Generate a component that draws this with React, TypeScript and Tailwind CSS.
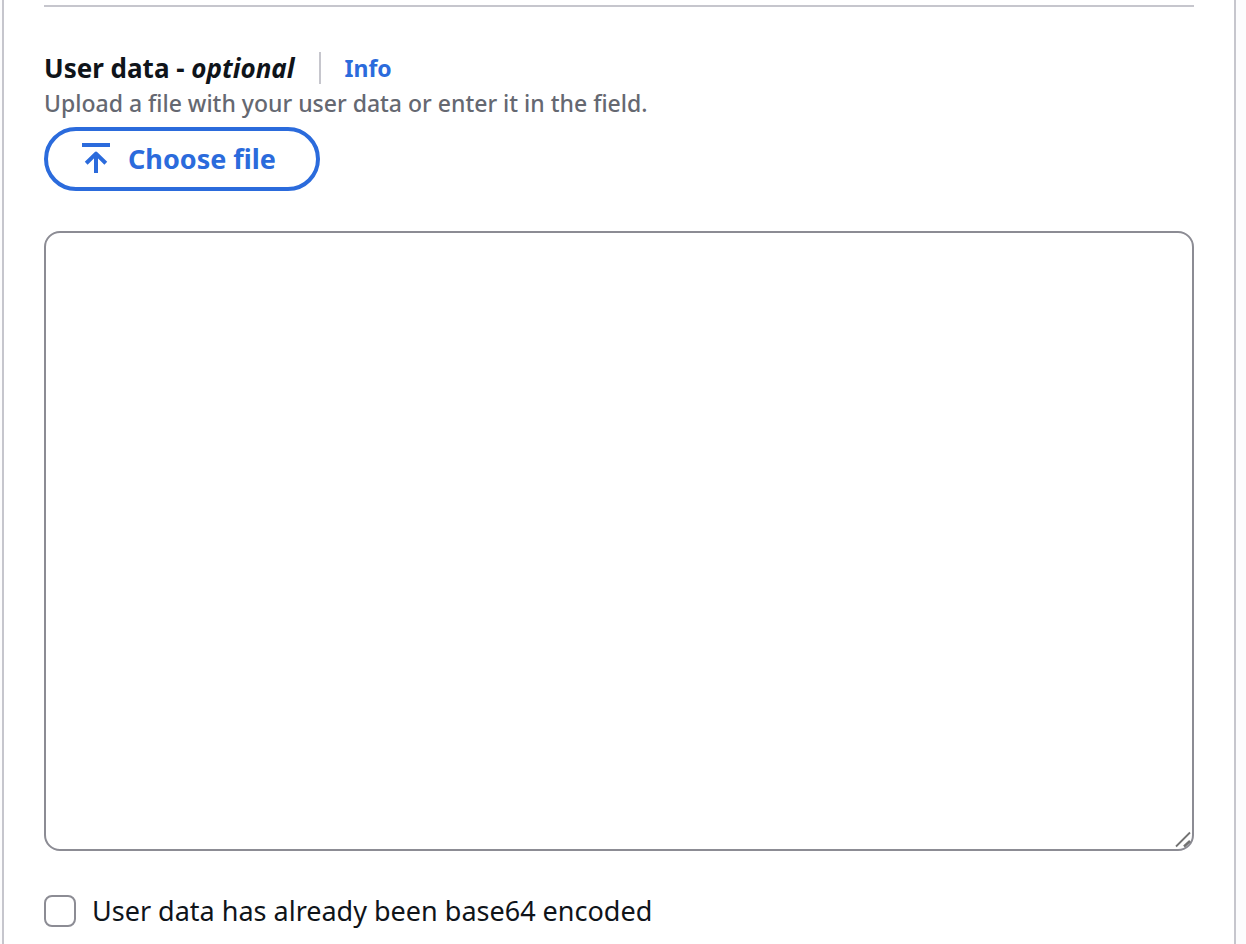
import { useId } from "react";

function UploadIcon() {
  return (
    <svg
      aria-hidden="true"
      viewBox="0 0 32 32"
      className="size-8 shrink-0"
      fill="none"
      stroke="currentColor"
      strokeWidth="4"
    >
      <path d="M2 2h28" />
      <path d="M16 30V11" />
      <path d="M6.200 20.200 16 10.600l9.800 9.600" strokeLinejoin="round" />
    </svg>
  );
}

function ResizeGrip() {
  return (
    <svg
      aria-hidden="true"
      viewBox="0 0 18 18"
      className="pointer-events-none absolute right-0.5 bottom-0.5 size-[18px]"
      fill="none"
      stroke="#737373"
      strokeWidth="1.800"
    >
      <path d="M2 15.500 16 1.500" />
      <path d="M10 15.500 16 10" strokeWidth="2.400" />
    </svg>
  );
}

export default function App() {
  const id = useId();
  const fieldId = `${id}-user-data`;
  const hintId = `${id}-hint`;
  const encodedId = `${id}-encoded`;

  return (
    <div className="min-h-screen bg-[#fcfcfd] pr-2.5 pl-0.5 font-['Noto_Sans',sans-serif] text-[#0f141a]">
      <main className="min-h-screen border-x-2 border-[#c6c6cd] bg-white px-10 pt-[5px] pb-4">
        <hr className="border-t-2 border-[#c6c6cd]" />

        <section className="mt-[45px]">
          <div className="flex items-center">
            <label htmlFor={fieldId} className="text-[26px] leading-8 font-bold">
              User data - <i>optional</i>
            </label>
            <span className="ml-6 h-8 border-l-2 border-[#c6c6cd]" />
            <a href="#info" className="ml-6 text-[23px] leading-8 font-bold text-[#2b6bdc]">
              Info
            </a>
          </div>
          <p id={hintId} className="mt-[3px] text-[23px] leading-8 font-medium text-[#656871]">
            Upload a file with your user data or enter it in the field.
          </p>
          <button
            type="button"
            className="mt-2 flex h-16 items-center gap-4 rounded-full border-4 border-[#2b6bdc] pr-10 pl-8 text-[27px] leading-8 font-bold text-[#2b6bdc]"
          >
            <UploadIcon />
            Choose file
          </button>

          <div className="relative mt-10">
            <textarea
              id={fieldId}
              aria-describedby={hintId}
              className="block h-[620px] w-full resize-none rounded-2xl border-2 border-[#8c8c94] bg-white px-6 py-2 text-[27px] outline-none"
            />
            <ResizeGrip />
          </div>

          <div className="mt-11 flex items-center gap-4">
            <input
              id={encodedId}
              type="checkbox"
              className="size-8 shrink-0 appearance-none rounded-lg border-2 border-[#8c8c94] bg-white checked:border-[#2b6bdc] checked:bg-[#2b6bdc]"
            />
            <label htmlFor={encodedId} className="text-[27px] leading-8">
              User data has already been base64 encoded
            </label>
          </div>
        </section>
      </main>
    </div>
  );
}
